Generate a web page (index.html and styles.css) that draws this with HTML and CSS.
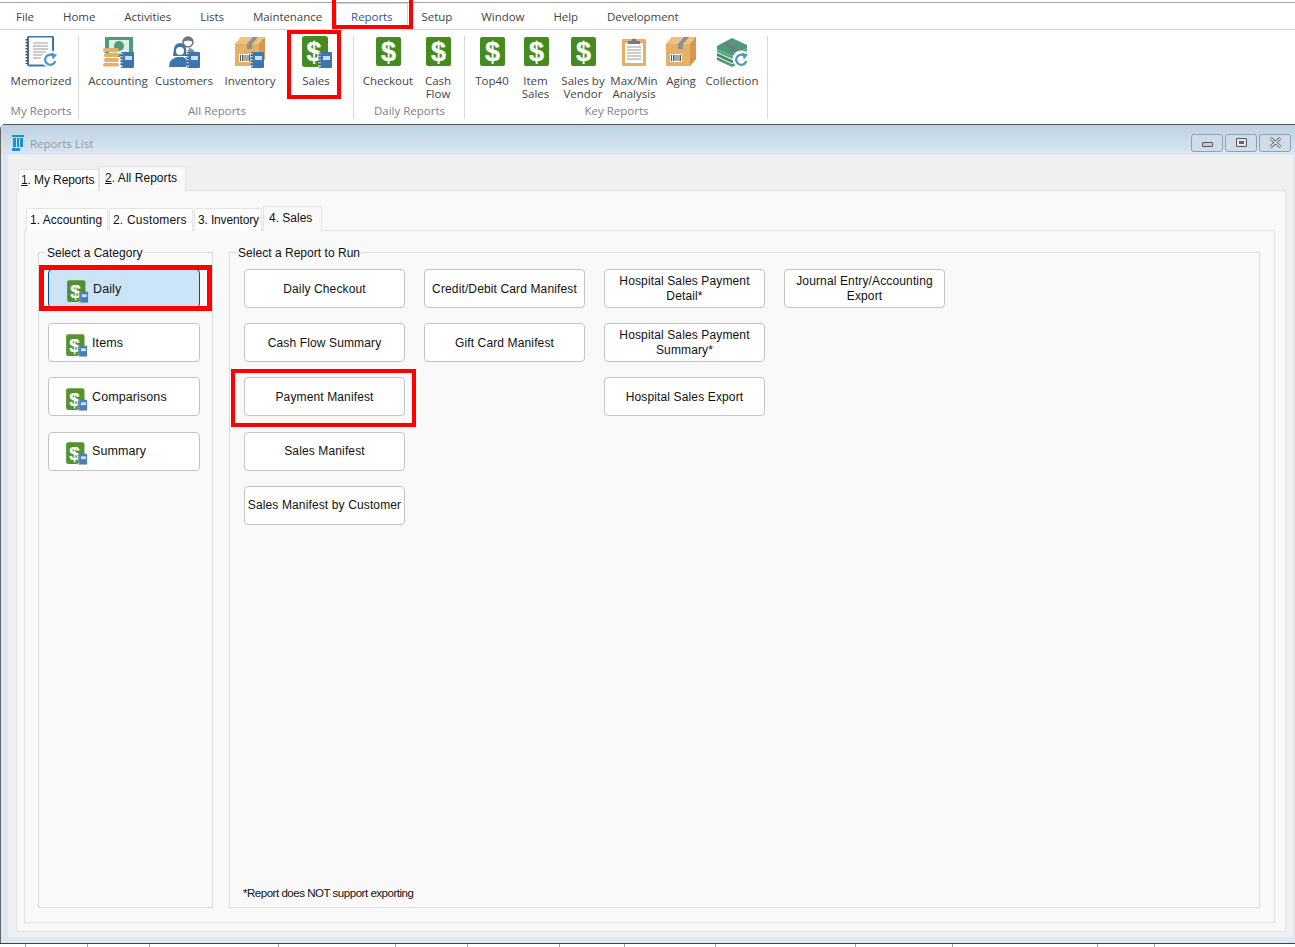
FILE: index.html
```html
<!DOCTYPE html>
<html lang="en">
<head>
    <meta charset="UTF-8">
    <title>Reports List</title>
    <link rel="stylesheet" href="styles.css">
</head>
<body>

    <svg class="defs" xmlns="http://www.w3.org/2000/svg">
        <symbol id="book" viewBox="0 0 14 16">
            <rect x="1" y="0" width="13" height="16" rx="1" fill="#3b76b0"/>
            <rect x="5" y="4" width="7" height="4" fill="#cfe0ef"/>
            <path d="M0 2h3M0 5h3M0 8h3M0 11h3M0 14h3" stroke="#fff" stroke-width="1"/>
            <path d="M0 3h3M0 6h3M0 9h3M0 12h3" stroke="#2c5a88" stroke-width="1"/>
        </symbol>
        <symbol id="refresh" viewBox="0 0 16 16">
            <path d="M13 9.500A5.400 5.400 0 1 1 10.500 3.600" fill="none" stroke="#4a97c9" stroke-width="2.400"/>
            <path d="M8.500 0.500L15 3l-4.500 5z" fill="#4a97c9"/>
        </symbol>
        <symbol id="dollar" viewBox="0 0 34 32">
            <rect x="5" y="1" width="25" height="29" rx="2" fill="#458b1e"/>
            <text x="17.500" y="25" text-anchor="middle" class="icon-dollar">$</text>
        </symbol>
        <symbol id="sales" viewBox="0 0 34 32">
            <rect x="3" y="0" width="26" height="31" rx="3" fill="#458b1e"/>
            <text x="15" y="25" text-anchor="middle" class="icon-dollar">$</text>
            <use href="#book" x="19" y="16" width="14" height="16"/>
        </symbol>
        <symbol id="carton" viewBox="0 0 30 29">
            <path d="M0 7L6 0h24v22l-6 7H0z" fill="#e6b066"/>
            <path d="M0 7L6 0h24l-6 7z" fill="#efc282"/>
            <path d="M24 7l6-7v22l-6 7z" fill="#d39a4f"/>
            <path d="M12 7l6-7h5l-6 7v5h-5z" fill="#8e8f91"/>
            <rect x="4" y="17" width="12" height="8" fill="#fff"/>
            <path d="M5.500 18v6M7.500 18v6M9 18v6M11 18v6M13 18v6M14.500 18v6" stroke="#555" stroke-width="1"/>
        </symbol>
        <symbol id="memorized" viewBox="0 0 34 32">
            <rect x="4" y="0.500" width="25" height="29" rx="1.500" fill="#fff" stroke="#3b76b0" stroke-width="2"/>
            <path d="M9 7h15M9 10h15M9 13h15M9 16h15M9 19h10M9 22h8" stroke="#9a9a9a" stroke-width="1"/>
            <path d="M3 3v25" stroke="#555" stroke-width="3" stroke-dasharray="1.500 1.500"/>
            <circle cx="26" cy="23" r="8.500" fill="#fff"/>
            <use href="#refresh" x="19" y="16" width="15" height="15"/>
        </symbol>
        <symbol id="accounting" viewBox="0 0 34 32">
            <rect x="4" y="1" width="28" height="20" fill="#4d9b78"/>
            <rect x="8" y="4" width="20" height="14" fill="#dcefe5"/>
            <circle cx="18" cy="10" r="5" fill="#4d9b78"/>
            <rect x="2" y="12" width="16" height="4" rx="2" fill="#e6b066"/>
            <rect x="3" y="17" width="15" height="4" rx="2" fill="#e6b066"/>
            <rect x="3" y="22" width="15" height="4" rx="2" fill="#e6b066"/>
            <rect x="2" y="27" width="16" height="3.500" rx="1.700" fill="#e6b066"/>
            <use href="#book" x="19" y="16" width="14" height="16"/>
        </symbol>
        <symbol id="customers" viewBox="0 0 34 32">
            <circle cx="21" cy="6" r="5" fill="#fff" stroke="#70757a" stroke-width="1.500"/>
            <path d="M16 6a5 5 0 0 1 10 0q-5-3-10 0z" fill="#70757a"/>
            <path d="M22 12q6 1 6 6h-8z" fill="#8a8f94"/>
            <path d="M7 13a6 6 0 0 1 12 0l1 7h-14z" fill="#3b76b0"/>
            <circle cx="13" cy="15" r="4" fill="#fff"/>
            <path d="M2 31q0-8 8-10h6q6 2 6 10z" fill="#3b76b0"/>
            <use href="#book" x="19" y="16" width="14" height="16"/>
        </symbol>
        <symbol id="inventory" viewBox="0 0 34 32">
            <use href="#carton" x="2" y="1" width="30" height="29"/>
            <use href="#book" x="17" y="16" width="14" height="16"/>
        </symbol>
        <symbol id="clipboard" viewBox="0 0 34 32">
            <rect x="5" y="3" width="24" height="27" rx="1" fill="#e6b066"/>
            <rect x="8" y="7" width="18" height="20" fill="#fff"/>
            <path d="M10 11h14M10 14h14M10 17h14M10 20h14M10 23h14" stroke="#9a9a9a" stroke-width="1"/>
            <path d="M11 8V5h3.500a2.500 2.500 0 0 1 5 0H23v3z" fill="#77797b"/>
        </symbol>
        <symbol id="aging" viewBox="0 0 34 32">
            <use href="#carton" x="2" y="1" width="30" height="29"/>
        </symbol>
        <symbol id="collection" viewBox="0 0 34 32">
            <path d="M2 10l15-8 15 7v3l-15 8-15-7z" fill="#4d9b78"/>
            <path d="M2 17l15 7 15-8v3l-15 8-15-7z" fill="#3f8768"/>
            <path d="M2 13l15 7 15-8v3l-15 8-15-7z" fill="#59a885"/>
            <path d="M2 21l15 7 12-6v3l-12 6-15-7z" fill="#4d9b78"/>
            <path d="M10 6l14 8v4l-14-8z" fill="#77797b"/>
            <circle cx="26" cy="23" r="8.500" fill="#fff"/>
            <use href="#refresh" x="19" y="16" width="15" height="15"/>
        </symbol>
    </svg>

    <div class="menubar">
        <span class="menu-item">File</span>
        <span class="menu-item">Home</span>
        <span class="menu-item">Activities</span>
        <span class="menu-item">Lists</span>
        <span class="menu-item">Maintenance</span>
        <span class="menu-item active">Reports</span>
        <span class="menu-item">Setup</span>
        <span class="menu-item">Window</span>
        <span class="menu-item">Help</span>
        <span class="menu-item">Development</span>
    </div>

    <div class="ribbon">
        <div class="group group-my">
            <div class="group-items">
                <div class="rb w66"><svg class="rb-icon"><use href="#memorized"/></svg><span>Memorized</span></div>
            </div>
            <div class="group-label">My Reports</div>
        </div>
        <div class="group group-all">
            <div class="group-items">
                <div class="rb w66"><svg class="rb-icon"><use href="#accounting"/></svg><span>Accounting</span></div>
                <div class="rb w66"><svg class="rb-icon"><use href="#customers"/></svg><span>Customers</span></div>
                <div class="rb w66"><svg class="rb-icon"><use href="#inventory"/></svg><span>Inventory</span></div>
                <div class="rb w66"><svg class="rb-icon"><use href="#sales"/></svg><span>Sales</span></div>
            </div>
            <div class="group-label">All Reports</div>
        </div>
        <div class="group group-daily">
            <div class="group-items">
                <div class="rb w58"><svg class="rb-icon"><use href="#dollar"/></svg><span>Checkout</span></div>
                <div class="rb w42"><svg class="rb-icon"><use href="#dollar"/></svg><span>Cash<br>Flow</span></div>
            </div>
            <div class="group-label">Daily Reports</div>
        </div>
        <div class="group group-key">
            <div class="group-items">
                <div class="rb w44"><svg class="rb-icon"><use href="#dollar"/></svg><span>Top40</span></div>
                <div class="rb w43"><svg class="rb-icon"><use href="#dollar"/></svg><span>Item<br>Sales</span></div>
                <div class="rb w52"><svg class="rb-icon"><use href="#dollar"/></svg><span>Sales by<br>Vendor</span></div>
                <div class="rb w50"><svg class="rb-icon"><use href="#clipboard"/></svg><span>Max/Min<br>Analysis</span></div>
                <div class="rb w44"><svg class="rb-icon"><use href="#aging"/></svg><span>Aging</span></div>
                <div class="rb w58"><svg class="rb-icon"><use href="#collection"/></svg><span>Collection</span></div>
            </div>
            <div class="group-label">Key Reports</div>
        </div>
    </div>

    <div class="window">
        <div class="titlebar">
            <svg class="title-icon" viewBox="0 0 12 16">
                <path d="M0 0h12v2H0zM1 3h3v9H1zM5 3h2v9H5zM8 3h3v9H8zM0 13h8v3H0z" fill="#1b8fd2"/>
            </svg>
            <span class="title-text">Reports List</span>
            <div class="win-btns">
                <div class="win-btn"><i class="ico-min"></i></div>
                <div class="win-btn"><i class="ico-max"></i></div>
                <div class="win-btn win-close">
                    <svg width="13" height="11" viewBox="0 0 13 11"><path d="M1.500 1l10 9M11.500 1l-10 9" stroke="#555" stroke-width="3"/><path d="M1.500 1l10 9M11.500 1l-10 9" stroke="#eee" stroke-width="1.400"/></svg>
                </div>
            </div>
        </div>

        <div class="win-body">
            <div class="tabs tabs-outer">
                <div class="tab"><u>1</u>. My Reports</div>
                <div class="tab selected"><u>2</u>. All Reports</div>
            </div>
            <div class="tab-panel">
                <div class="tabs tabs-inner">
                    <div class="tab">1. Accounting</div>
                    <div class="tab">2. Customers</div>
                    <div class="tab">3. Inventory</div>
                    <div class="tab selected">4. Sales</div>
                </div>
                <div class="inner-panel">
                    <fieldset class="box box-cat">
                        <legend>Select a Category</legend>
                        <div class="btn-list">
                            <div class="btn cat selected"><svg class="cat-icon"><use href="#sales"/></svg>Daily</div>
                            <div class="btn cat"><svg class="cat-icon"><use href="#sales"/></svg>Items</div>
                            <div class="btn cat"><svg class="cat-icon"><use href="#sales"/></svg>Comparisons</div>
                            <div class="btn cat"><svg class="cat-icon"><use href="#sales"/></svg>Summary</div>
                        </div>
                    </fieldset>
                    <fieldset class="box box-rep">
                        <legend>Select a Report to Run</legend>
                        <div class="rep-grid">
                            <div class="btn">Daily Checkout</div>
                            <div class="btn">Credit/Debit Card Manifest</div>
                            <div class="btn">Hospital Sales Payment Detail*</div>
                            <div class="btn">Journal Entry/Accounting Export</div>
                            <div class="btn">Cash Flow Summary</div>
                            <div class="btn">Gift Card Manifest</div>
                            <div class="btn">Hospital Sales Payment Summary*</div>
                            <div class="empty"></div>
                            <div class="btn">Payment Manifest</div>
                            <div class="empty"></div>
                            <div class="btn">Hospital Sales Export</div>
                            <div class="empty"></div>
                            <div class="btn">Sales Manifest</div>
                            <div class="empty"></div>
                            <div class="empty"></div>
                            <div class="empty"></div>
                            <div class="btn">Sales Manifest by Customer</div>
                        </div>
                        <div class="footnote">*Report does NOT support exporting</div>
                    </fieldset>
                </div>
            </div>
        </div>
    </div>

    <div class="statusbar">
        <i></i><i></i><i></i><i></i><i></i><i></i><i></i><i></i><i></i><i></i><i></i><i></i><i></i>
    </div>

    <!-- red callouts drawn over the screenshot -->
    <div class="mark mark-reports"></div>
    <div class="mark mark-sales"></div>
    <div class="mark mark-daily"></div>
    <div class="mark mark-payment"></div>

</body>
</html>
```

FILE: styles.css
```css
* {
    margin: 0;
    padding: 0;
    box-sizing: border-box;
}
html, body {
    height: 947px;
    overflow: hidden;
}
body {
    position: relative;
    display: flex;
    flex-direction: column;
    background-color: #fff;
    font-family: "Open Sans", "Noto Sans", sans-serif;
    font-size: 11.5px;
    color: #444;
}
.defs {
    display: none;
}
.icon-dollar {
    font-family: "Liberation Sans", sans-serif;
    font-weight: bold;
    font-size: 27px;
    fill: #fff;
    stroke: #fff;
    stroke-width: 0.3px;
}

/* menu */
.menubar {
    display: flex;
    margin-top: 2px;
    height: 28px;
    padding-left: 1.500px;
    border-top: 1px solid #a6a6a6;
    border-bottom: 1px solid #d4d4d4;
}
.menu-item {
    padding: 0 14.500px;
    line-height: 28px;
    height: 27px;
    color: #444;
    letter-spacing: -0.05px;
}
.menu-item.active {
    color: #2f5597;
    background-color: #fff;
    border: 1px solid #d4d4d4;
    border-bottom: 0;
    height: 27px;
    margin-left: -1px;
    margin-right: -1px;
    line-height: 26px;
}

/* ribbon */
.ribbon {
    display: flex;
    height: 94px;
    padding-top: 6px;
}
.group {
    display: flex;
    flex-direction: column;
    height: 83px;
    border-right: 1px solid #d9d9d9;
}
.group-my { width: 79px; padding-left: 8px; }
.group-all { width: 275px; padding-left: 6px; }
.group-daily { width: 111px; padding-left: 5px; }
.group-key { width: 303px; padding-left: 5px; }
.group-items {
    display: flex;
    height: 68px;
}
.group-label {
    text-align: center;
    color: #7f7f7f;
    line-height: 14px;
    margin-left: -4px;
}
.rb {
    display: flex;
    flex-direction: column;
    align-items: center;
    text-align: center;
    line-height: 13px;
    white-space: nowrap;
}
.rb-icon {
    width: 34px;
    height: 32px;
    margin-bottom: 6px;
    flex: none;
}
.w42 { width: 42px; }
.w43 { width: 43px; }
.w44 { width: 44px; }
.w50 { width: 50px; }
.w52 { width: 52px; }
.w58 { width: 58px; }
.w66 { width: 66px; }

/* window */
.window {
    flex: 1;
    display: flex;
    flex-direction: column;
    border-top: 1px solid #555;
    border-left: 1px solid #666;
    border-top-left-radius: 5px;
    background-color: #dbe7f3;
    padding: 0 2px 6px 7px;
}
.titlebar {
    display: flex;
    align-items: center;
    height: 30px;
    margin: 0 -2px 0 -7px;
    padding: 6px 4px 0 11px;
    background: linear-gradient(#bdd1e1, #dbe7f3);
}
.title-icon {
    width: 12px;
    height: 16px;
    margin-right: 6px;
}
.title-text {
    flex: 1;
    color: #8d98a3;
    font-size: 11.500px;
}
.win-btns {
    display: flex;
    gap: 2px;
    margin-right: 0;
    margin-top: -1px;
}
.win-btn {
    display: flex;
    align-items: center;
    justify-content: center;
    width: 32px;
    height: 18px;
    border: 1px solid #8ea0b4;
    border-radius: 3px;
    background-color: #cfdcea;
}
.ico-min {
    display: block;
    width: 11px;
    height: 5px;
    margin-top: 3px;
    background-color: #ccc;
    border: 1px solid #555;
    border-radius: 1px;
}
.ico-max {
    display: block;
    width: 11px;
    height: 9px;
    background-color: #e8e8e8;
    border: 1px solid #555;
    box-shadow: inset 0 0 0 2px #e8e8e8, inset 0 0 0 4px #666;
    border-radius: 1px;
}
.win-body {
    flex: 1;
    display: flex;
    flex-direction: column;
    background-color: #f0f0f0;
    padding: 11px 7px 0 8px;
}

/* tabs */
.tabs {
    display: flex;
    align-items: flex-end;
    color: #111;
    font-family: "Liberation Sans", sans-serif;
    font-size: 12px;
}
.tab {
    background-color: #fff;
    border: 1px solid #e3e3e3;
    border-bottom: 0;
    border-radius: 2px 2px 0 0;
    white-space: nowrap;
}
.tabs-outer {
    height: 25px;
    padding-left: 2px;
    margin-bottom: -1px;
    position: relative;
    z-index: 1;
}
.tabs-outer .tab {
    width: 81px;
    height: 22px;
    padding: 3px 0 0 2px;
    letter-spacing: -0.1px;
}
.tabs-outer .tab.selected {
    width: 87px;
    height: 25px;
    padding: 4px 0 0 5px;
    letter-spacing: 0.05px;
    background-color: #f9f9f9;
}
.tab-panel {
    flex: 1;
    display: flex;
    flex-direction: column;
    background-color: #f9f9f9;
    border: 1px solid #e3e3e3;
    margin-bottom: 5px;
    padding: 15px 10px 8px 7px;
}
.tabs-inner {
    height: 25px;
    padding-left: 2px;
    margin-bottom: -1px;
    position: relative;
    z-index: 1;
}
.tabs-inner .tab {
    height: 23px;
    margin-right: 1px;
    padding: 4px 0 0 3px;
}
.tabs-inner .tab:nth-child(1) { width: 82px; }
.tabs-inner .tab:nth-child(2) { width: 84px; letter-spacing: 0.2px; }
.tabs-inner .tab:nth-child(3) { width: 68px; letter-spacing: -0.15px; }
.tabs-inner .tab.selected {
    width: 59px;
    height: 25px;
    padding: 4px 0 0 5px;
    background-color: #f9f9f9;
}
.inner-panel {
    flex: 1;
    display: flex;
    gap: 16px;
    border: 1px solid #e3e3e3;
    padding: 13px 14px 14px 13px;
}

/* group boxes */
.box {
    display: flex;
    flex-direction: column;
    border: 1px solid #dcdcdc;
    font-family: "Liberation Sans", sans-serif;
    font-size: 12px;
    color: #111;
}
.box legend {
    padding: 2px 1px 0;
    line-height: 14px;
}
.box-cat {
    width: 175px;
    padding: 9px 12px 0 9px;
}
.box-cat legend {
    margin-left: -2px;
}
.box-rep {
    flex: 1;
    padding: 9px 14px 7px 14px;
}
.box-rep legend {
    margin-left: -7px;
    letter-spacing: 0.03px;
}
.btn {
    display: flex;
    align-items: center;
    justify-content: center;
    text-align: center;
    height: 39px;
    padding-top: 1px;
    background-color: #fff;
    border: 1px solid #c4c4c4;
    border-radius: 4px;
    line-height: 15px;
    letter-spacing: 0.13px;
}
.btn-list {
    display: grid;
    grid-auto-rows: 39px;
    row-gap: 15.200px;
}
.btn.cat {
    justify-content: flex-start;
    padding-left: 15px;
    font-size: 12.500px;
    letter-spacing: 0.1px;
}
.btn.cat.selected {
    background-color: #cce4f7;
    border-color: #005499;
    padding-left: 16px;
    padding-top: 2px;
}
.cat-icon {
    width: 24px;
    height: 23px;
    margin-right: 4px;
    margin-top: 4px;
    opacity: 0.92;
}
.rep-grid {
    display: grid;
    grid-template-columns: repeat(4, 161px);
    grid-auto-rows: 39px;
    column-gap: 19px;
    row-gap: 15.200px;
}
.footnote {
    margin-top: auto;
    margin-left: -1px;
    font-size: 11.500px;
    letter-spacing: -0.47px;
    line-height: 14px;
}

/* bottom strip */
.statusbar {
    display: flex;
    height: 4px;
    border-top: 1px solid #444;
}
.statusbar i {
    display: block;
    border-right: 1px solid #a0a0a0;
}
.statusbar i:nth-child(1) { width: 26px; }
.statusbar i:nth-child(2) { width: 62px; }
.statusbar i:nth-child(3) { width: 62px; }
.statusbar i:nth-child(4) { width: 129px; }
.statusbar i:nth-child(5) { width: 117px; }
.statusbar i:nth-child(6) { width: 72px; }
.statusbar i:nth-child(7) { width: 92px; }
.statusbar i:nth-child(8) { width: 65px; }
.statusbar i:nth-child(9) { width: 91px; }
.statusbar i:nth-child(10) { width: 140px; }
.statusbar i:nth-child(11) { width: 97px; }
.statusbar i:nth-child(12) { width: 145px; }
.statusbar i:nth-child(13) { width: 57px; }

/* red callouts */
.mark {
    position: absolute;
    border: 4px solid #f00;
}
.mark-reports { left: 332px; top: -4px; width: 81px; height: 33px; }
.mark-sales { left: 287px; top: 30px; width: 54px; height: 69px; }
.mark-daily { left: 39px; top: 265px; width: 173px; height: 46px; border-width: 5px; }
.mark-payment { left: 231px; top: 369px; width: 185px; height: 58px; }
```
